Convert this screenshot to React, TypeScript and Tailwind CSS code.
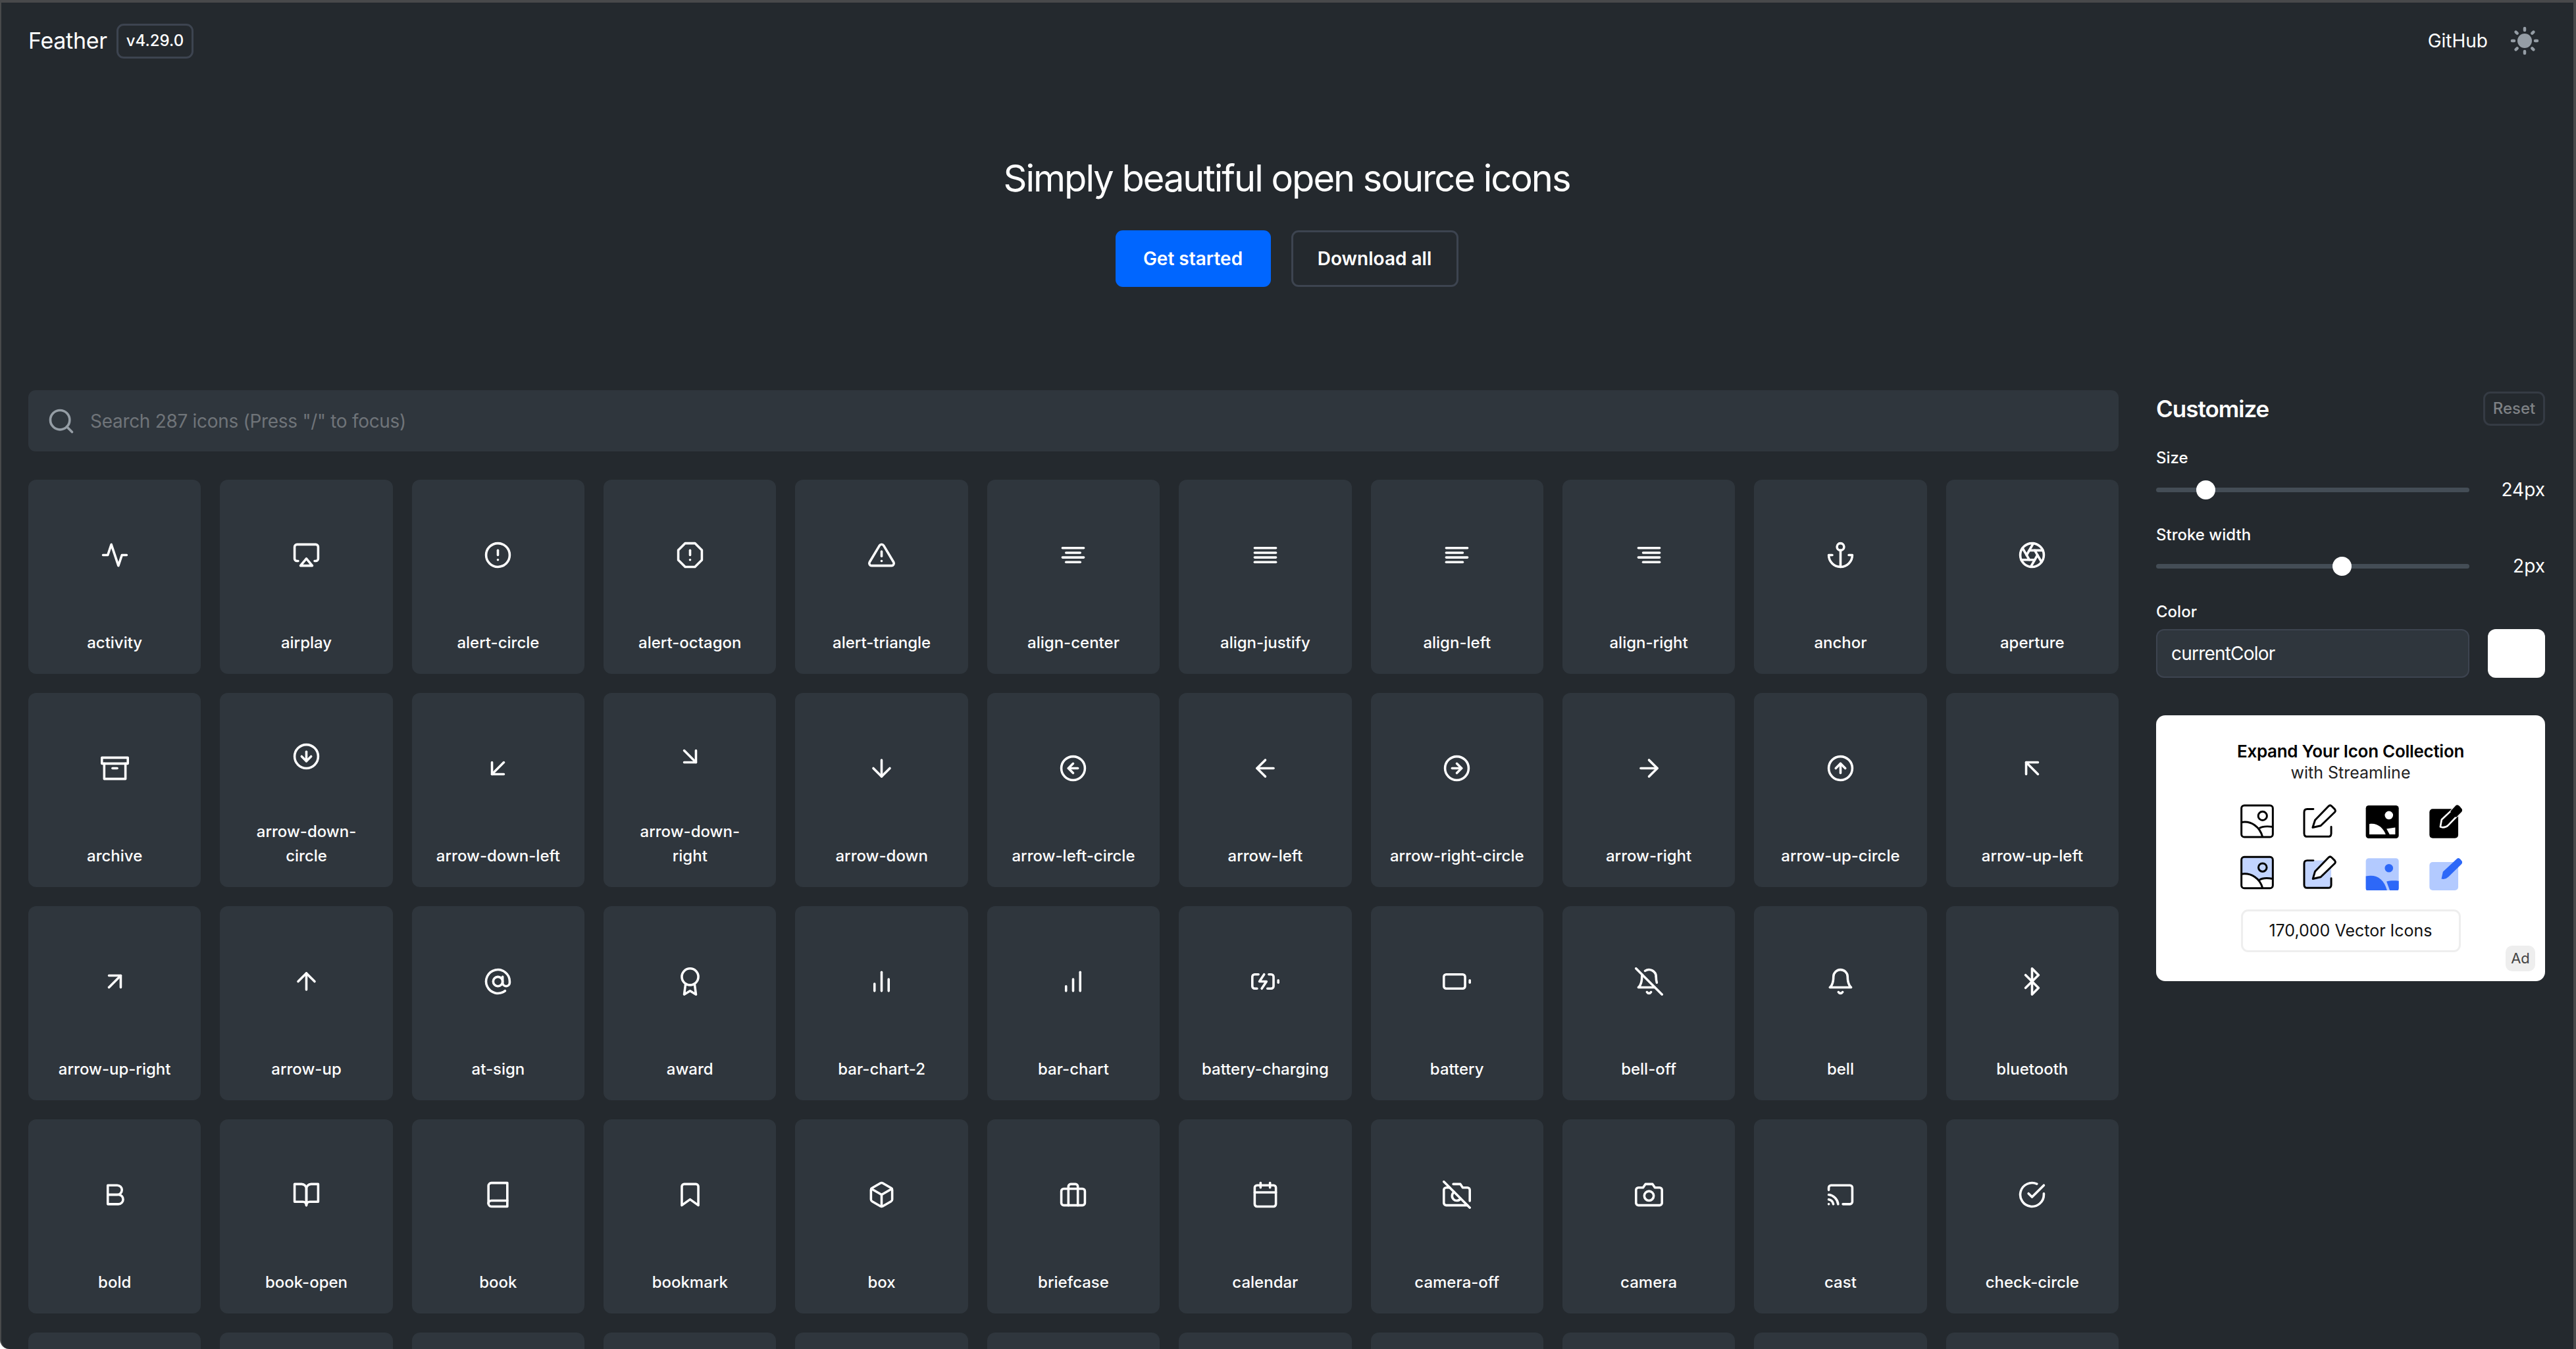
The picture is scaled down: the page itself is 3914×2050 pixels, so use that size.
import {
  FiActivity, FiAirplay, FiAlertCircle, FiAlertOctagon, FiAlertTriangle, FiAlignCenter, FiAlignJustify,
  FiAlignLeft, FiAlignRight, FiAnchor, FiAperture, FiArchive, FiArrowDownCircle, FiArrowDownLeft,
  FiArrowDownRight, FiArrowDown, FiArrowLeftCircle, FiArrowLeft, FiArrowRightCircle, FiArrowRight,
  FiArrowUpCircle, FiArrowUpLeft, FiArrowUpRight, FiArrowUp, FiAtSign, FiAward, FiBarChart2, FiBarChart,
  FiBatteryCharging, FiBattery, FiBellOff, FiBell, FiBluetooth, FiBold, FiBookOpen, FiBook, FiBookmark,
  FiBox, FiBriefcase, FiCalendar, FiCameraOff, FiCamera, FiCast, FiCheckCircle, FiSearch,
} from "react-icons/fi";
import type { IconType } from "react-icons";

const ICONS: [string, IconType][] = [
  ["activity", FiActivity], ["airplay", FiAirplay], ["alert-circle", FiAlertCircle], ["alert-octagon", FiAlertOctagon],
  ["alert-triangle", FiAlertTriangle], ["align-center", FiAlignCenter], ["align-justify", FiAlignJustify],
  ["align-left", FiAlignLeft], ["align-right", FiAlignRight], ["anchor", FiAnchor], ["aperture", FiAperture],
  ["archive", FiArchive], ["arrow-down-circle", FiArrowDownCircle], ["arrow-down-left", FiArrowDownLeft],
  ["arrow-down-right", FiArrowDownRight], ["arrow-down", FiArrowDown], ["arrow-left-circle", FiArrowLeftCircle],
  ["arrow-left", FiArrowLeft], ["arrow-right-circle", FiArrowRightCircle], ["arrow-right", FiArrowRight],
  ["arrow-up-circle", FiArrowUpCircle], ["arrow-up-left", FiArrowUpLeft],
  ["arrow-up-right", FiArrowUpRight], ["arrow-up", FiArrowUp], ["at-sign", FiAtSign], ["award", FiAward],
  ["bar-chart-2", FiBarChart2], ["bar-chart", FiBarChart], ["battery-charging", FiBatteryCharging],
  ["battery", FiBattery], ["bell-off", FiBellOff], ["bell", FiBell], ["bluetooth", FiBluetooth],
  ["bold", FiBold], ["book-open", FiBookOpen], ["book", FiBook], ["bookmark", FiBookmark], ["box", FiBox],
  ["briefcase", FiBriefcase], ["calendar", FiCalendar], ["camera-off", FiCameraOff], ["camera", FiCamera],
  ["cast", FiCast], ["check-circle", FiCheckCircle],
];

// these two wrap after "arrow-down-" in the picture
const WRAPPED = new Set(["arrow-down-circle", "arrow-down-right"]);
// top of the fifth row, cut off by the window
const NEXT_ROW = Array.from({ length: 11 }, (_, i) => i);

const PENCIL_TOP = "M355 128 L366 94 L428 30 Q435 23 442 30 L456 44 Q462 51 456 58 L392 120 Z";
const PENCIL_LOW = "M356 362 L366 328 L428 264 Q435 257 442 264 L456 278 Q462 285 456 292 L392 354 Z";

function SunIcon() {
  const rays = [0, 45, 90, 135, 180, 225, 270, 315];
  return (
    <svg viewBox="0 0 44 44" className="w-[44px] h-[44px]" fill="#959da5">
      <circle cx="22" cy="22" r="11" />
      {rays.map((r) => (
        <line key={r} x1="22" y1="3" x2="22" y2="6" stroke="#959da5" strokeWidth="4.5" strokeLinecap="round" transform={`rotate(${r} 22 22)`} />
      ))}
    </svg>
  );
}

function StreamlineGrid() {
  return (
    <div className="flex flex-col gap-[26px] mt-[31px]">
      <div className="flex gap-[42px]">
        <svg viewBox="22 18 160 160" className="w-[53px] h-[53px]" fill="none" stroke="#000" strokeWidth="9">
          <rect x="30" y="27" width="144" height="145" rx="13" />
          <circle cx="127" cy="75" r="20" />
          <path d="M30 104 C75 96 115 125 127 172" />
          <path d="M112 132 C125 122 150 122 174 125" />
        </svg>
        <svg viewBox="307 18 160 160" className="w-[53px] h-[53px]" fill="none" stroke="#000" strokeWidth="9" strokeLinejoin="round" strokeLinecap="round">
          <path d="M358 44 H330 Q316 44 316 58 V156 Q316 170 330 170 H426 Q440 170 440 156 V125" />
          <path d={PENCIL_TOP} />
        </svg>
        <svg viewBox="22 18 160 160" className="w-[53px] h-[53px]">
          <rect x="27" y="27" width="151" height="151" rx="13" fill="#000" />
          <circle cx="133" cy="72" r="19" fill="#fff" />
          <path d="M43 112 C78 106 106 128 118 160 H43 Z" fill="#fff" />
          <path d="M122 134 L162 128 V160 H136 Z" fill="#fff" />
        </svg>
        <svg viewBox="308 18 160 160" className="w-[53px] h-[53px]">
          <rect x="318" y="43" width="132" height="134" rx="15" fill="#000" />
          <path d="M368 125 L374 92 L438 32 Q448 24 456 32 L464 42 Q470 50 462 58 L404 118 Q394 128 380 128 Z" fill="#000" stroke="#fff" strokeWidth="8" strokeLinejoin="round" />
          <path d="M440 26 Q448 22 456 30 L466 42 Q472 50 464 58 L440 82 L414 54 Z" fill="#000" />
        </svg>
      </div>
      <div className="flex gap-[42px]">
        <svg viewBox="22 255 160 160" className="w-[53px] h-[53px]" fill="none" stroke="#000" strokeWidth="9">
          <rect x="30" y="262" width="144" height="143" rx="13" fill="#c2d4ff" stroke="none" />
          <path d="M30 340 C75 333 115 360 127 405 H30 Z" fill="#fff" stroke="none" />
          <path d="M112 368 C125 358 150 358 174 362 V405 H127 Z" fill="#fff" stroke="none" />
          <rect x="30" y="262" width="144" height="143" rx="13" />
          <circle cx="127" cy="310" r="19" />
          <path d="M30 340 C75 333 115 360 127 405" />
          <path d="M112 368 C125 358 150 358 174 362" />
        </svg>
        <svg viewBox="307 255 160 160" className="w-[53px] h-[53px]" fill="none" stroke="#000" strokeWidth="9" strokeLinejoin="round" strokeLinecap="round">
          <rect x="316" y="278" width="124" height="126" rx="13" fill="#c2d4ff" stroke="none" />
          <path d="M358 278 H330 Q316 278 316 292 V390 Q316 404 330 404 H426 Q440 404 440 390 V360" />
          <path d={PENCIL_LOW} fill="#fff" />
        </svg>
        <svg viewBox="22 255 160 160" className="w-[53px] h-[53px]">
          <rect x="27" y="268" width="151" height="150" rx="13" fill="#b3caff" />
          <circle cx="133" cy="313" r="19" fill="#2d68f8" />
          <path d="M27 350 C75 340 110 360 125 418 H40 Q27 418 27 405 Z" fill="#2d68f8" />
          <path d="M122 374 C135 371 155 369 178 372 V405 Q178 418 165 418 H138 Z" fill="#2d68f8" />
        </svg>
        <svg viewBox="308 255 160 160" className="w-[53px] h-[53px]">
          <rect x="318" y="285" width="132" height="130" rx="15" fill="#b3caff" />
          <path d="M373 362 L380 330 L444 270 Q452 264 460 272 L466 280 Q472 288 464 296 L406 352 Q396 362 382 364 Z" fill="#2d68f8" />
        </svg>
      </div>
    </div>
  );
}

function Slider({ left, value }: { left: string; value: string }) {
  return (
    <div className="flex items-center h-[30px]">
      <div className="relative w-[476px] h-[7px] rounded-full bg-[#444d56]">
        <span className={`absolute top-[-11px] w-[29px] h-[29px] rounded-full bg-white ${left}`} />
      </div>
      <span className="flex-1 text-right text-[28px] leading-[30px]">{value}</span>
    </div>
  );
}

export default function App() {
  return (
    <div className="h-[2050px] overflow-hidden bg-[#24292e] text-white font-['Inter',sans-serif] border-t-4 border-r-4 border-l-2 border-[#48494b] rounded-bl-[14px]">
      <header className="flex items-center justify-between h-[116px] pl-[41px] pr-[52px]">
        <div className="flex items-center gap-[14px]">
          <span className="text-[34px] leading-none tracking-[-0.3px]">Feather</span>
          <span className="flex items-center h-[53px] px-[12px] border-[3px] border-[#3d4450] rounded-[11px] text-[24px] font-medium">v4.29.0</span>
        </div>
        <div className="flex items-center gap-[34px]">
          <span className="text-[28px]">GitHub</span>
          <SunIcon />
        </div>
      </header>

      <section className="flex flex-col items-center pt-[117px] pr-[2px]">
        <h1 className="text-[56px] leading-[68px] font-normal tracking-[-2px]">Simply beautiful open source icons</h1>
        <div className="flex gap-[31px] mt-[45px]">
          <button type="button" className="w-[236px] h-[86px] rounded-[11px] bg-[#0066ff] text-[28px] font-semibold">Get started</button>
          <button type="button" className="w-[254px] h-[86px] rounded-[11px] border-[3px] border-[#3d4450] text-[28px] font-semibold">Download all</button>
        </div>
      </section>

      <main className="flex gap-[57px] pl-[41px] pr-[43px] mt-[157px]">
        <div className="flex-1 min-w-0">
          <div className="flex items-center h-[93px] pl-[28px] gap-[22px] rounded-[11px] bg-[#2f363d] mb-[43px]">
            <FiSearch className="w-[44px] h-[44px] text-[#959da5]" />
            <input
              readOnly
              placeholder={'Search 287 icons (Press "/" to focus)'}
              className="flex-1 bg-transparent text-[28px] tracking-[-0.3px] outline-none placeholder:text-[#6f7479]"
            />
          </div>
          <div className="grid grid-cols-11 gap-[29px] auto-rows-[295px]">
            {ICONS.map(([name, Icon]) => (
              <div key={name} className="flex flex-col items-center rounded-[12px] bg-[#2f363d] pb-[29px]">
                <div className="flex-1 flex items-center justify-center">
                  <Icon className="w-[43px] h-[43px]" />
                </div>
                <span className={`text-center text-[24px] leading-[37px] font-medium ${WRAPPED.has(name) ? "w-[190px]" : "whitespace-nowrap"}`}>{name}</span>
              </div>
            ))}
            {NEXT_ROW.map((i) => (
              <div key={i} className="rounded-[12px] bg-[#2f363d]" />
            ))}
          </div>
        </div>

        <aside className="w-[591px] shrink-0">
          <div className="flex items-center justify-between h-[52px] mt-[2px]">
            <h2 className="text-[35px] font-semibold leading-none tracking-[-1px]">Customize</h2>
            <button type="button" className="w-[94px] h-[52px] rounded-[11px] border-[3px] border-[#353b44] text-[24px] font-medium text-[#7e8185]">Reset</button>
          </div>
          <div className="text-[24px] leading-[36px] font-medium mt-[31px]">Size</div>
          <div className="mt-[15px]"><Slider left="left-[61px]" value="24px" /></div>
          <div className="text-[24px] leading-[36px] font-medium mt-[36px]">Stroke width</div>
          <div className="mt-[14px]"><Slider left="left-[268px]" value="2px" /></div>
          <div className="text-[24px] leading-[36px] font-medium mt-[37px]">Color</div>
          <div className="flex justify-between mt-[8px]">
            <input
              readOnly
              value="currentColor"
              className="w-[476px] h-[74px] px-[21px] rounded-[12px] border-[2px] border-[#3d4450] bg-[#2f363d] text-[28px] tracking-[-0.8px] outline-none"
            />
            <div className="w-[87px] h-[74px] rounded-[12px] bg-white" />
          </div>

          <div className="relative flex flex-col items-center h-[404px] mt-[57px] pt-[39px] rounded-[14px] bg-white text-[#111]">
            <div className="text-[26px] leading-[32px] font-semibold tracking-[-0.28px] text-black">Expand Your Icon Collection</div>
            <div className="text-[25px] leading-[32px] text-[#222]">with Streamline</div>
            <StreamlineGrid />
            <div className="flex items-center justify-center w-[334px] h-[65px] mt-[29px] rounded-[11px] border-[3px] border-[#eeeeee] text-[25px]">170,000 Vector Icons</div>
            <span className="absolute right-[15px] bottom-[15px] flex items-center justify-center w-[45px] h-[39px] rounded-[10px] bg-[#eeeeee] text-[22px] text-[#444]">Ad</span>
          </div>
        </aside>
      </main>
    </div>
  );
}
